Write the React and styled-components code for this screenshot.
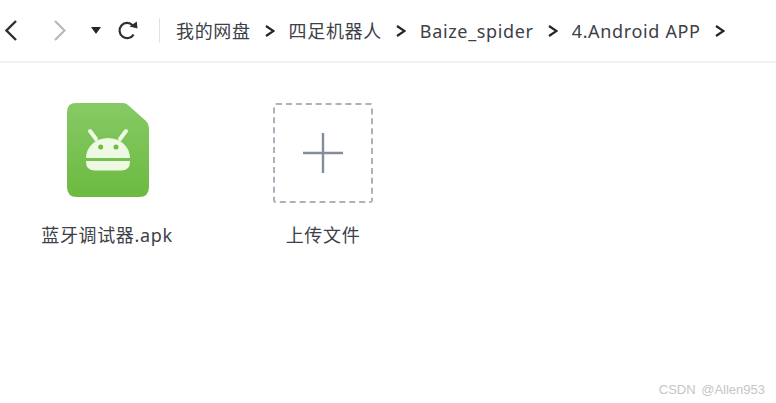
import styled, { createGlobalStyle } from "styled-components";

const GlobalStyle = createGlobalStyle`
    html, body {
        margin: 0;
        padding: 0;
        background: #fff;
    }
`;

const crumbs = ["我的网盘", "四足机器人", "Baize_spider", "4.Android APP"];

const App = () => {
    return (
        <Page>
            <GlobalStyle />
            <Toolbar>
                <NavIcon $width={12} $left={5} viewBox="0 0 12 21">
                    <polyline points="11,1 1.5,10.5 11,20" fill="none" stroke="#2c3036" strokeWidth="2.4" />
                </NavIcon>
                <NavIcon $width={12} $left={37} viewBox="0 0 12 21">
                    <polyline points="1,1 10.5,10.5 1,20" fill="none" stroke="#b8b8b8" strokeWidth="2.2" />
                </NavIcon>
                <NavIcon $width={10} $height={7} $left={25} viewBox="0 0 10 7">
                    <polygon points="0,0 10,0 5,7" fill="#23262b" />
                </NavIcon>
                <NavIcon $width={20} $height={19} $left={17} viewBox="0 0 20 19">
                    <path d="M15.6 13.6A7.6 7.6 0 1 1 14.6 4.2" fill="none" stroke="#2c3036" strokeWidth="2.2" />
                    <polygon points="11.5,5.6 19.5,7.4 18.8,0.6" fill="#2c3036" />
                </NavIcon>
                <Divider />
                <Breadcrumb>
                    {crumbs.map((name) => (
                        <Crumb key={name}>
                            <CrumbName>{name}</CrumbName>
                            <Chevron viewBox="0 0 10 12">
                                <polyline points="1,1 8.5,6 1,11" fill="none" stroke="#23262b" strokeWidth="2.2" />
                            </Chevron>
                        </Crumb>
                    ))}
                </Breadcrumb>
            </Toolbar>
            <Files>
                <FileCell>
                    <Thumb>
                        <svg width="82" height="94" viewBox="0 0 82 94">
                            <defs>
                                <linearGradient id="apkFill" x1="0" y1="0" x2="0" y2="1">
                                    <stop offset="0" stopColor="#86ca65" />
                                    <stop offset="1" stopColor="#6cba40" />
                                </linearGradient>
                            </defs>
                            <path
                                d="M9 0H56Q59 0 61 2L79 18Q82 21 82 25V84Q82 94 72 94H10Q0 94 0 84V9Q0 0 9 0Z"
                                fill="url(#apkFill)"
                            />
                            <path d="M23 28L29 36M59 28L53 36" stroke="#eef9e4" strokeWidth="4" strokeLinecap="round" />
                            <path d="M19 55A22 20 0 0 1 63 55Z" fill="#eef9e4" />
                            <path d="M19 58H63V59Q63 67.5 54 67.5H28Q19 67.5 19 59Z" fill="#eef9e4" />
                            <circle cx="33.7" cy="44" r="2.5" fill="#6fbb48" />
                            <circle cx="49" cy="44" r="2.5" fill="#6fbb48" />
                        </svg>
                    </Thumb>
                    <FileLabel>蓝牙调试器.apk</FileLabel>
                </FileCell>
                <FileCell>
                    <UploadBox>
                        <svg width="42" height="42" viewBox="0 0 42 42">
                            <path d="M21 1V41M1 21H41" stroke="#858c9b" strokeWidth="2.4" />
                        </svg>
                    </UploadBox>
                    <FileLabel>上传文件</FileLabel>
                </FileCell>
            </Files>
            <Watermark>CSDN @Allen953</Watermark>
        </Page>
    );
};

export default App;

const Page = styled.div`
    position: relative;
    width: 776px;
    height: 403px;
    overflow: hidden;
    background: #fff;
    font-family: "Noto Sans", "Noto Sans CJK SC", sans-serif;
`;

const Toolbar = styled.div`
    display: flex;
    align-items: center;
    height: 61px;
    border-bottom: 2px solid #f2f2f2;
`;

const NavIcon = styled.svg`
    flex: none;
    width: ${(p) => p.$width}px;
    height: ${(p) => p.$height || 21}px;
    margin-left: ${(p) => p.$left}px;
`;

const Divider = styled.div`
    flex: none;
    width: 1px;
    height: 25px;
    margin-left: 21px;
    background: #e2e2e2;
`;

const Breadcrumb = styled.div`
    display: flex;
    align-items: center;
    gap: 14px;
    margin-left: 16px;
`;

const Crumb = styled.div`
    display: flex;
    align-items: center;
    gap: 14px;
`;

const CrumbName = styled.span`
    font-size: 18px;
    letter-spacing: 0.65px;
    line-height: 24px;
    color: #3c4048;
    white-space: nowrap;
`;

const Chevron = styled.svg`
    flex: none;
    width: 10px;
    height: 12px;
`;

const Files = styled.div`
    display: flex;
    gap: 84px;
    padding: 40px 0 0 41px;
`;

const FileCell = styled.div`
    display: flex;
    flex-direction: column;
    align-items: center;
    width: 132px;
`;

const Thumb = styled.div`
    display: flex;
    justify-content: center;
    align-items: flex-start;
    height: 100px;
    padding-left: 2px;
`;

const UploadBox = styled.div`
    box-sizing: border-box;
    display: flex;
    justify-content: center;
    align-items: center;
    width: 100px;
    height: 100px;
    border: 2px dashed #b0b0bc;
    border-radius: 3px;
`;

const FileLabel = styled.div`
    margin-top: 20px;
    font-size: 18px;
    letter-spacing: 0.65px;
    line-height: 24px;
    color: #3c4048;
    white-space: nowrap;
`;

const Watermark = styled.div`
    position: absolute;
    right: 11px;
    bottom: 5px;
    font-family: "Liberation Sans", sans-serif;
    font-size: 13px;
    word-spacing: 2px;
    line-height: 16px;
    color: #c6c6c6;
`;
